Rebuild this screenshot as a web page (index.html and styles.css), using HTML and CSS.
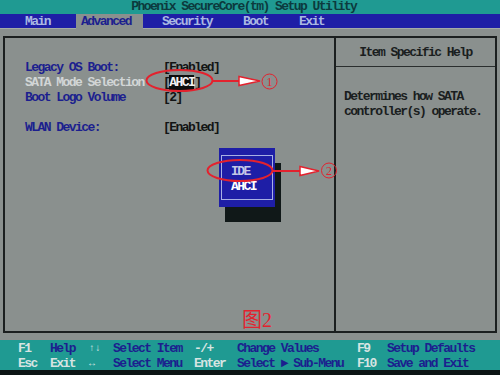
FILE: index.html
```html
<!DOCTYPE html>
<html lang="zh">
<head>
	<meta charset="UTF-8">
	<title>Phoenix SecureCore(tm) Setup Utility</title>
	<link rel="stylesheet" href="styles.css">
</head>
<body>

<div class="title">Phoenix SecureCore(tm) Setup Utility</div>

<div class="menu">
	<span class="tab">Main</span>
	<span class="tab active">Advanced</span>
	<span class="tab">Security</span>
	<span class="tab">Boot</span>
	<span class="tab">Exit</span>
</div>

<div class="main">
	<div class="frame">
		<div class="settings">
			<div class="row">
				<span class="label">Legacy OS Boot:</span>
				<span class="value">[Enabled]</span>
			</div>
			<div class="row">
				<span class="label selected">SATA Mode Selection</span>
				<span class="value">[<span class="hilite">AHCI</span>]</span>
			</div>
			<div class="row">
				<span class="label">Boot Logo Volume</span>
				<span class="value">[2]</span>
			</div>
			<div class="row"></div>
			<div class="row">
				<span class="label">WLAN Device:</span>
				<span class="value">[Enabled]</span>
			</div>
		</div>
		<div class="help">
			<div class="help-title">Item Specific Help</div>
			<div class="help-text">
				<p>Determines how SATA</p>
				<p>controller(s) operate.</p>
			</div>
		</div>
	</div>
</div>

<!-- option popup -->
<div class="popup">
	<div class="popup-inner">
		<div class="option">IDE</div>
		<div class="option current">AHCI</div>
	</div>
</div>

<div class="footer">
	<div class="keys">
		<span class="key">F1</span><span class="desc">Help</span>
		<span class="key arrows">&#8593;&#8595;</span><span class="desc">Select Item</span>
		<span class="key">-/+</span><span class="desc">Change Values</span>
		<span class="key">F9</span><span class="desc">Setup Defaults</span>

		<span class="key">Esc</span><span class="key">Exit</span>
		<span class="key arrows">&#8596;</span><span class="desc">Select Menu</span>
		<span class="key">Enter</span><span class="desc">Select &#9658; Sub-Menu</span>
		<span class="key">F10</span><span class="desc">Save and Exit</span>
	</div>
</div>
<div class="bottom"></div>

<!-- red annotations drawn over the screen -->
<svg class="marks" width="500" height="375" viewBox="0 0 500 375">
	<g fill="none" stroke="#e3222e" stroke-width="2">
		<ellipse cx="179.5" cy="80.5" rx="33" ry="10.5"/>
		<line x1="213" y1="81" x2="241" y2="81"/>
		<ellipse cx="240" cy="170.5" rx="32.5" ry="10.5"/>
		<line x1="272" y1="171" x2="301" y2="171"/>
	</g>
	<g fill="#fff" stroke="#e3222e" stroke-width="1.5">
		<polygon points="239,76.5 260,81 239,85.5"/>
		<polygon points="300,166.5 319,171 300,175.5"/>
	</g>
	<g fill="none" stroke="#e3222e" stroke-width="1">
		<circle cx="269.5" cy="81.5" r="7.5"/>
		<circle cx="329" cy="170.5" r="7.5"/>
	</g>
	<g class="num" fill="#e3222e">
		<text x="269.5" y="86" text-anchor="middle">1</text>
		<text x="329" y="175" text-anchor="middle">2</text>
	</g>
	<text class="fig" x="242" y="327" fill="#e3222e">图2</text>
</svg>

</body>
</html>
```

FILE: styles.css
```css
:root {
	--cw: 6.25px;
	--teal: #1f9a92;
	--blue: #1e1ea6;
	--gray: #8a908e;
	--navy: #1c1f8e;
	--dark: #111616;
	font-family: "Liberation Mono", "DejaVu Sans Mono", monospace;
	font-size: 13px;
	font-weight: bold;
	letter-spacing: -1.55px;
}

body {
	margin: 0;
	width: 500px;
	height: 375px;
	position: relative;
	overflow: hidden;
	background-color: var(--gray);
	line-height: 15px;
}

p {
	margin: 0;
}

.title {
	height: 14px;
	line-height: 14px;
	padding-left: calc(var(--cw) * 21);
	background-color: var(--teal);
	color: #0c3a3e;
}

.menu {
	display: flex;
	gap: 14px;
	height: 15px;
	padding-left: 20px;
	background-color: var(--blue);
	color: #aab8e2;
}
.tab {
	padding: 0 12px 0 5px;
}
.tab.active {
	background-color: var(--gray);
	color: var(--navy);
}

.main {
	height: 297px;
	padding: 7px 3px 7px 3px;
	border-top: 1px solid #a4aaa8;
	margin-top: -1px;
}
.frame {
	display: flex;
	height: 293px;
	border: 2px solid #1b1f1f;
}

.settings {
	flex: 1;
	padding: 22px 0 0 20px;
}
.row {
	display: flex;
	height: 15px;
}
.label {
	width: 138px;
	color: var(--navy);
}
.label.selected {
	color: #d2d6d6;
}
.value {
	color: #121414;
}
.hilite {
	background-color: #0c0e0e;
	color: #f2f2f2;
}

.help {
	width: 159px;
	border-left: 2px solid #1b1f1f;
	color: #1a1e1e;
}
.help-title {
	padding: 7px 0 6px;
	text-align: center;
	border-bottom: 1px solid #2a2e2e;
}
.help-text {
	padding: 22px 0 0 8px;
}

.popup {
	position: absolute;
	left: 219px;
	top: 148px;
	width: 56px;
	height: 59px;
	background-color: var(--blue);
	box-shadow: 6px 15px 0 #101818;
}
.popup-inner {
	margin: 7px 2px;
	border: 1px solid #a8b0e4;
	padding: 8px 0 0 9px;
	box-sizing: border-box;
	height: 45px;
}
.option {
	color: #c4c8e6;
}
.option.current {
	color: #ffffff;
}

.footer {
	height: 30px;
	background-color: var(--teal);
	box-sizing: border-box;
	padding: 1px 0 0 18px;
}
.keys {
	display: grid;
	grid-template-columns: 32px 39px 24px 81px 43px 120px 30px auto;
}
.key {
	color: #d6e4e2;
}
.desc {
	color: var(--navy);
}
.arrows {
	font-size: 10px;
	letter-spacing: 0;
}

.bottom {
	height: 5px;
	background-color: #0c1414;
}

.marks {
	position: absolute;
	left: 0;
	top: 0;
	pointer-events: none;
}
.num {
	font-family: "Liberation Serif", serif;
	font-size: 12px;
	font-weight: normal;
	letter-spacing: 0;
}
.fig {
	font-family: "Liberation Serif", "Noto Sans CJK SC", serif;
	font-size: 20px;
	font-weight: normal;
	letter-spacing: 0;
}
```
